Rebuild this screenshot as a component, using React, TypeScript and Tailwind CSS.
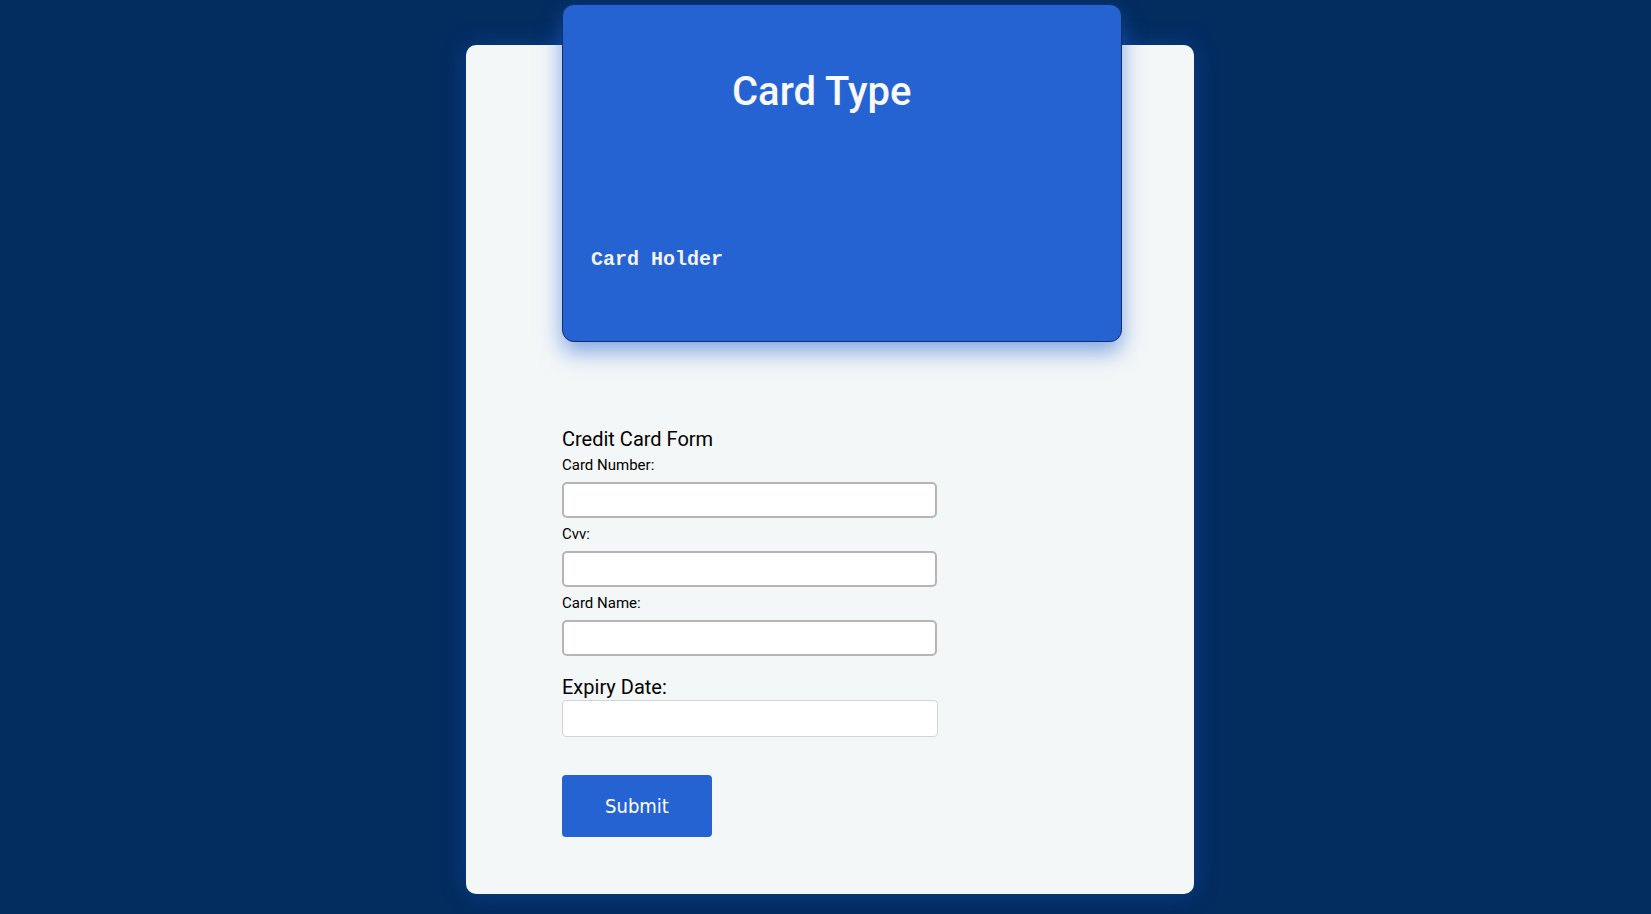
import React from "react";

const roboto = { fontFamily: "Roboto, 'Noto Sans', sans-serif" };

function Field({ label, mt }: { label: string; mt: string }) {
  return (
    <>
      <label className={`${mt} block text-[15px] leading-[18px] text-black`}>{label}</label>
      <input
        type="text"
        className="mt-[8px] h-[36px] w-[375px] rounded-[5px] border-2 border-[#b5b5b5] bg-white px-2 outline-none"
      />
    </>
  );
}

export default function App() {
  return (
    <div className="flex min-h-screen justify-center bg-[#032c5f]" style={roboto}>
      <div className="ml-[9px] mt-[45px] flex h-[849px] w-[728px] flex-col rounded-[10px] bg-[#f4f7f8] pl-[96px] shadow-[0_0_24px_rgba(25,85,190,0.45)]">
        <div className="-mt-[41px] h-[338px] w-[560px] shrink-0 rounded-[12px] border border-[#0f3068] bg-[#2563d3] shadow-[0_10px_22px_rgba(37,99,211,0.55)]">
          <h1 className="pl-[169px] pt-[63px] text-[40px] font-medium leading-[48px] text-[#f8f8ff]">Card Type</h1>
          <p
            className="mt-[132px] pl-[28px] text-[20px] font-bold leading-[24px] text-[#f2f2f2]"
            style={{ fontFamily: "'Liberation Mono', 'Courier New', monospace" }}
          >
            Card Holder
          </p>
        </div>

        <form className="flex flex-col" onSubmit={(e) => e.preventDefault()}>
          <h2 className="mt-[85px] text-[20px] leading-[24px] text-black">Credit Card Form</h2>
          <Field label="Card Number:" mt="mt-[5px]" />
          <Field label="Cvv:" mt="mt-[7px]" />
          <Field label="Card Name:" mt="mt-[7px]" />
          <label className="mt-[19px] block text-[20px] leading-[24px] text-black">Expiry Date:</label>
          <input
            type="text"
            className="mt-[1px] h-[37px] w-[376px] rounded-[4px] border border-[#ced4da] bg-white px-2 outline-none"
          />
          <button
            type="submit"
            className="mt-[38px] h-[62px] w-[150px] rounded-[4px] bg-[#2563d3] text-[20px] text-white"
            style={{ fontFamily: "'DejaVu Sans Condensed', 'DejaVu Sans', sans-serif", fontStretch: "condensed" }}
          >
            Submit
          </button>
        </form>
      </div>
    </div>
  );
}
